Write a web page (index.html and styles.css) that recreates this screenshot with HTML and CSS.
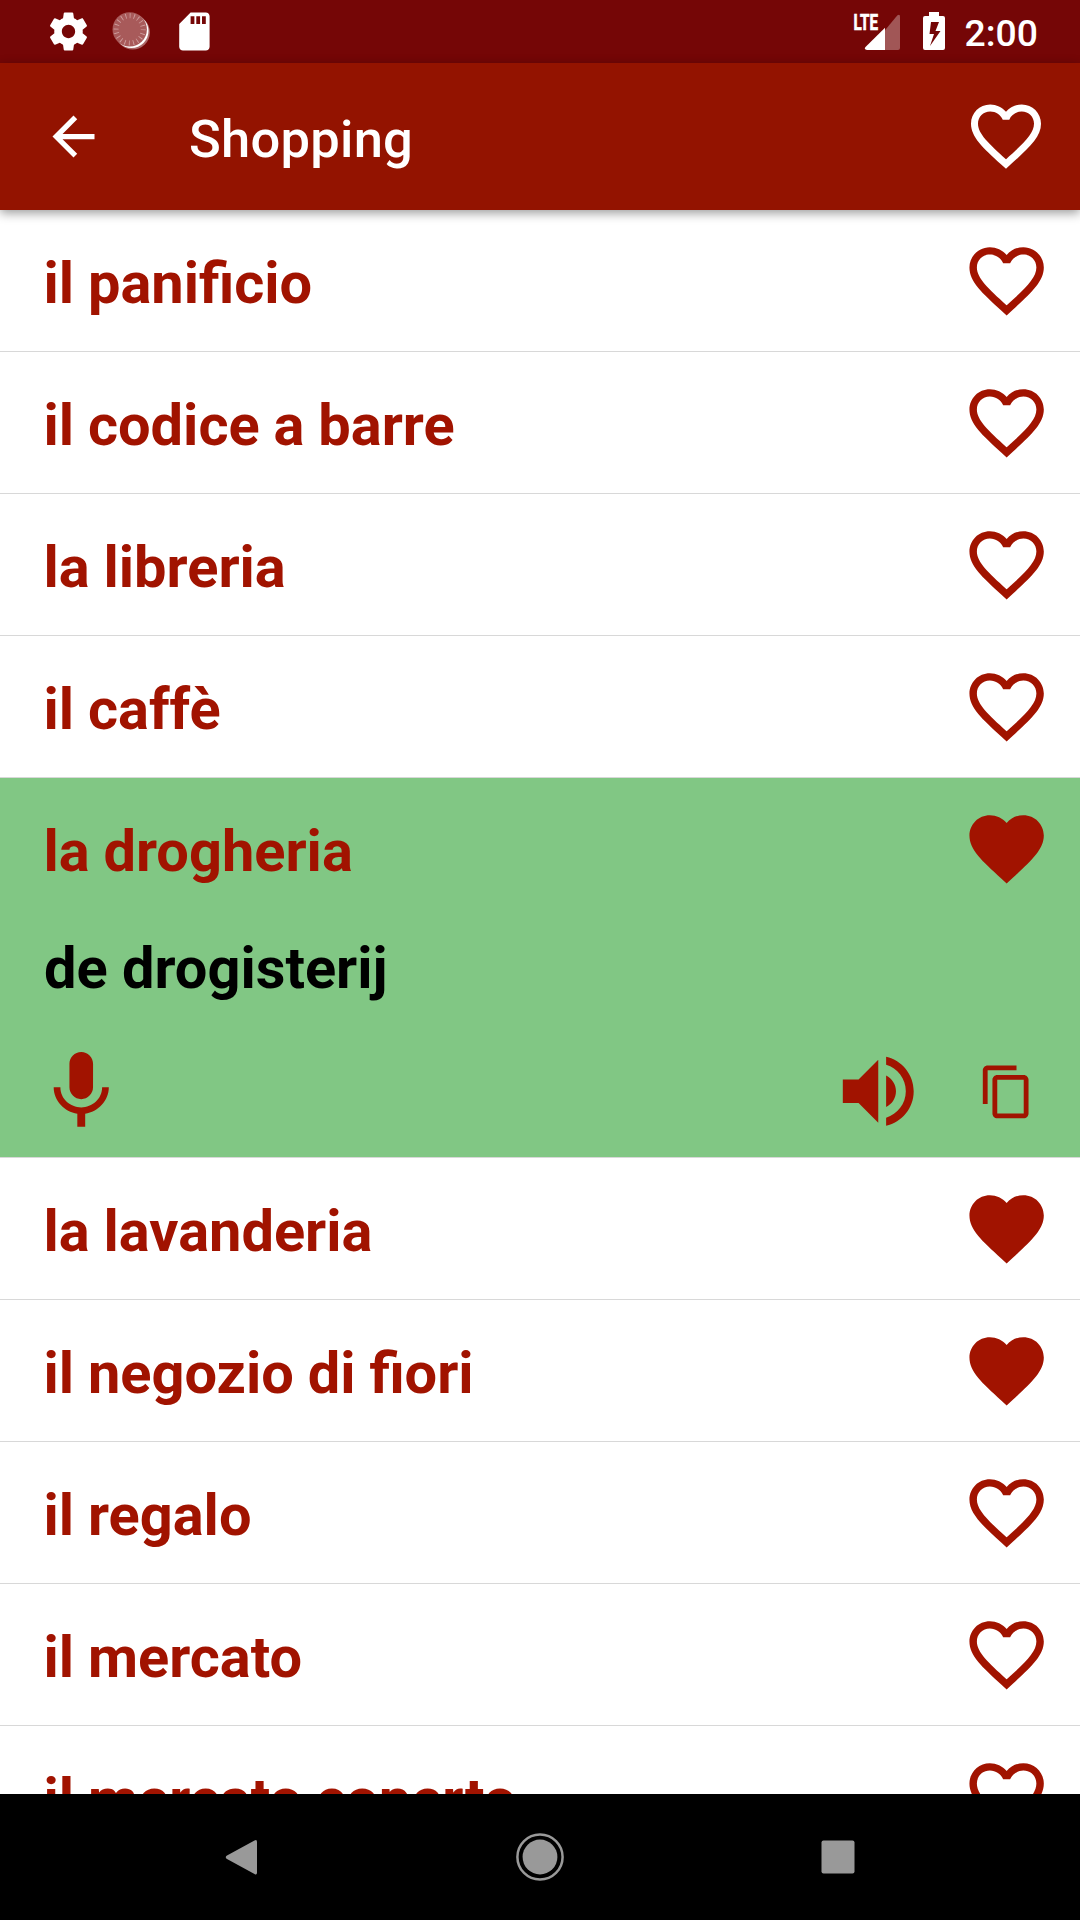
FILE: index.html
```html
<!DOCTYPE html>
<html lang="it">
<head>
<meta charset="utf-8">
<title>Shopping</title>
<link rel="stylesheet" href="styles.css">
</head>
<body>
<svg class="defs" aria-hidden="true">
  <symbol id="heart" viewBox="0 0 24 24"><path d="M12 21.35l-1.45-1.32C5.4 15.36 2 12.28 2 8.5 2 5.42 4.42 3 7.5 3c1.74 0 3.41.81 4.5 2.09C13.09 3.81 14.76 3 16.5 3 19.58 3 22 5.42 22 8.5c0 3.78-3.4 6.86-8.55 11.54L12 21.35z"/></symbol>
  <symbol id="heart-outline" viewBox="0 0 24 24"><path d="M16.5 3c-1.74 0-3.41.81-4.5 2.09C10.91 3.81 9.24 3 7.5 3 4.42 3 2 5.42 2 8.5c0 3.78 3.4 6.86 8.55 11.54L12 21.35l1.45-1.32C18.6 15.36 22 12.28 22 8.5 22 5.42 19.58 3 16.5 3zm-4.4 15.55l-.1.1-.1-.1C7.14 14.24 4 11.39 4 8.5 4 6.5 5.5 5 7.5 5c1.54 0 3.04.99 3.57 2.36h1.87C13.46 5.99 14.96 5 16.5 5c2 0 3.5 1.5 3.5 3.5 0 2.89-3.14 5.74-7.9 10.05z"/></symbol>
</svg>
<div class="screen">
  <div class="status">
    <svg class="status-left" width="180" height="63" viewBox="40 0 180 63">
      <path transform="translate(45.7 8.7) scale(1.9)" d="M19.43 12.98c.04-.32.07-.64.07-.98s-.03-.66-.07-.98l2.11-1.65c.19-.15.24-.42.12-.64l-2-3.46c-.12-.22-.39-.3-.61-.22l-2.49 1c-.52-.4-1.08-.73-1.69-.98l-.38-2.65C14.46 2.18 14.25 2 14 2h-4c-.25 0-.46.18-.49.42l-.38 2.65c-.61.25-1.17.59-1.69.98l-2.49-1c-.23-.09-.49 0-.61.22l-2 3.46c-.13.22-.07.49.12.64l2.11 1.65c-.04.32-.07.65-.07.98s.03.66.07.98l-2.11 1.65c-.19.15-.24.42-.12.64l2 3.46c.12.22.39.3.61.22l2.49-1c.52.4 1.08.73 1.69.98l.38 2.65c.03.24.24.42.49.42h4c.25 0 .46-.18.49-.42l.38-2.65c.61-.25 1.17-.59 1.69-.98l2.49 1c.23.09.49 0 .61-.22l2-3.46c.12-.22.07-.49-.12-.64l-2.11-1.65zM12 15.5c-1.93 0-3.5-1.57-3.5-3.5s1.57-3.5 3.5-3.5 3.5 1.57 3.5 3.5-1.57 3.5-3.5 3.5z"/>
      <circle class="halo" cx="132.7" cy="32.3" r="17.2"/>
      <circle cx="131.5" cy="31" r="17"/>
      <circle class="disc" cx="129.7" cy="29.4" r="17.2"/>
      <circle class="ticks" cx="129.7" cy="29.4" r="13.6" pathLength="120"/>
      <path transform="translate(171.6 8.7) scale(1.9)" d="M18 2h-8L4.02 8 4 20c0 1.1.9 2 2 2h12c1.1 0 2-.9 2-2V4c0-1.1-.9-2-2-2zm-6 6h-2V4h2v4zm3 0h-2V4h2v4zm3 0h-2V4h2v4z"/>
    </svg>
    <div class="status-right">
      <svg width="102" height="63" viewBox="850 0 102 63">
        <path class="weak" d="M885 30.3 897.2 15.5q2.8-1.8 2.8 1V48q0 2-2 2H885z"/>
        <path d="M885 27.8V50H867q-3.5-.6-1.5-3z"/>
        <text class="lte" x="853.5" y="29.6" textLength="24.5" lengthAdjust="spacingAndGlyphs">LTE</text>
        <path d="M929 12h10v4h4q2 0 2 2v30q0 2-2 2H925q-2 0-2-2V18q0-2 2-2h4zM931 22l-1.5 12h4.500L930 46l10.500-15h-5l3.500-9z" fill-rule="evenodd"/>
      </svg>
      <span class="clock">2:00</span>
    </div>
  </div>
  <header class="appbar">
    <svg class="back" viewBox="0 0 24 24"><path d="M20 11H7.830l5.590-5.590L12 4l-8 8 8 8 1.410-1.410L7.830 13H20v-2z"/></svg>
    <h1 class="title">Shopping</h1>
    <svg class="bar-heart"><use href="#heart-outline"/></svg>
  </header>
  <main class="list">
    <div class="row"><span class="term">il panificio</span><svg class="fav"><use href="#heart-outline"/></svg></div>
    <div class="row"><span class="term">il codice a barre</span><svg class="fav"><use href="#heart-outline"/></svg></div>
    <div class="row"><span class="term">la libreria</span><svg class="fav"><use href="#heart-outline"/></svg></div>
    <div class="row"><span class="term">il caffè</span><svg class="fav"><use href="#heart-outline"/></svg></div>
    <section class="open">
      <div class="row"><span class="term">la drogheria</span><svg class="fav"><use href="#heart"/></svg></div>
      <p class="translation" lang="nl">de drogisterij</p>
      <div class="actions">
        <svg class="act mic" viewBox="0 0 24 24"><path d="M12 14c1.660 0 2.990-1.340 2.990-3L15 5c0-1.660-1.340-3-3-3S9 3.340 9 5v6c0 1.660 1.340 3 3 3zm5.300-3c0 3-2.540 5.100-5.300 5.100S6.700 14 6.700 11H5c0 3.410 2.720 6.230 6 6.720V21h2v-3.280c3.280-.48 6-3.300 6-6.720h-1.700z"/></svg>
        <svg class="act" viewBox="0 0 24 24"><path d="M3 9v6h4l5 5V4L7 9H3zm13.500 3c0-1.770-1.020-3.290-2.500-4.030v8.050c1.480-.73 2.500-2.250 2.500-4.020zM14 3.230v2.060c2.890.86 5 3.540 5 6.710s-2.110 5.850-5 6.710v2.060c4.010-.91 7-4.490 7-8.770s-2.990-7.860-7-8.770z"/></svg>
        <svg class="copy" viewBox="0 0 24 24"><path d="M16 1H4c-1.100 0-2 .9-2 2v14h2V3h12V1zm3 4H8c-1.100 0-2 .9-2 2v14c0 1.100.9 2 2 2h11c1.100 0 2-.9 2-2V7c0-1.100-.9-2-2-2zm0 16H8V7h11v14z"/></svg>
      </div>
    </section>
    <div class="row"><span class="term">la lavanderia</span><svg class="fav"><use href="#heart"/></svg></div>
    <div class="row"><span class="term">il negozio di fiori</span><svg class="fav"><use href="#heart"/></svg></div>
    <div class="row"><span class="term">il regalo</span><svg class="fav"><use href="#heart-outline"/></svg></div>
    <div class="row"><span class="term">il mercato</span><svg class="fav"><use href="#heart-outline"/></svg></div>
    <div class="row"><span class="term">il mercato coperto</span><svg class="fav"><use href="#heart-outline"/></svg></div>
  </main>
  <nav class="navbar">
    <svg viewBox="0 0 48 48"><path d="M33.500 7.500Q36 6 36 9V39.500Q36 42.500 33.500 41L6 26Q3.500 24.200 6 22.500z"/></svg>
    <svg class="home" viewBox="0 0 48 48"><circle cx="24" cy="24" r="17.400"/><circle class="ring" cx="24" cy="24" r="22.600"/></svg>
    <svg viewBox="0 0 48 48"><rect x="7.500" y="7.500" width="33" height="33" rx="2"/></svg>
  </nav>
</div>
</body>
</html>
```
FILE: styles.css
```css
* { box-sizing: border-box; margin: 0; padding: 0; }

body {
  width: 1080px;
  height: 1920px;
  overflow: hidden;
  background: #fff;
  font-family: Roboto, sans-serif;
}

svg { display: block; flex: none; fill: currentColor; }
.defs { display: none; }

.screen { display: flex; flex-direction: column; height: 1920px; }

/* system status bar */
.status {
  display: flex;
  justify-content: space-between;
  flex: none;
  height: 63px;
  padding: 0 42px 0 40px;
  background: #750606;
  color: #fff;
}
.status-right { display: flex; gap: 13px; }
.clock { font-size: 37.3px; font-weight: 500; line-height: 67px; }
.lte { font-size: 22.5px; font-weight: 700; stroke: currentColor; stroke-width: .7; }
.weak { opacity: .32; }
.halo { opacity: .4; }
.disc { fill: #a85a5a; }
.ticks { fill: none; stroke: #cf9f9f; stroke-width: 5; stroke-dasharray: 1.200 4.800; }

/* app bar */
.appbar {
  position: relative;
  display: flex;
  align-items: center;
  flex: none;
  height: 147px;
  padding: 0 32px 0 42px;
  background: #931300;
  color: #fff;
  box-shadow: 0 3px 10px rgba(0, 0, 0, .4);
}
.back { width: 63px; height: 63px; }
.title { flex: 1; margin-left: 84px; font-size: 52.5px; font-weight: 500; line-height: 62px; padding-top: 5px; letter-spacing: .25px; }
.bar-heart { width: 84px; height: 84px; margin-bottom: 2px; }

/* phrase list */
.list { flex: 1; overflow: hidden; color: #a11300; }
.row {
  display: flex;
  align-items: flex-start;
  justify-content: space-between;
  height: 142px;
  padding: 26px 29px 0 43.5px;
  border-bottom: 1px solid #d8d8d8;
}
.term, .translation { font-size: 57.75px; font-weight: 700; line-height: 68px; }
.term { padding-top: 13px; word-spacing: -.5px; }
.fav { width: 89.250px; height: 89.250px; }

.open { height: 380px; background: #81c784; border-bottom: 1px solid #d8d8d8; }
.open .row { height: 141px; border: 0; }
.translation { height: 124px; padding: 15px 44px 0; color: #000; }
.actions { display: flex; align-items: center; height: 97px; padding: 0 44px 0 34px; }
.act { width: 94.500px; height: 94.500px; }
.mic { margin-right: auto; }
.copy { width: 57.750px; height: 57.750px; margin-left: 52.500px; }

/* system navigation */
.navbar {
  display: flex;
  justify-content: space-between;
  flex: none;
  height: 126px;
  padding: 38.500px 218px 0 221px;
  background: #000;
  color: #999;
}
.navbar svg { width: 48px; height: 48px; }
.navbar .home { margin-right: 4px; }
.ring { fill: none; stroke: currentColor; stroke-width: 2.500; }
```
